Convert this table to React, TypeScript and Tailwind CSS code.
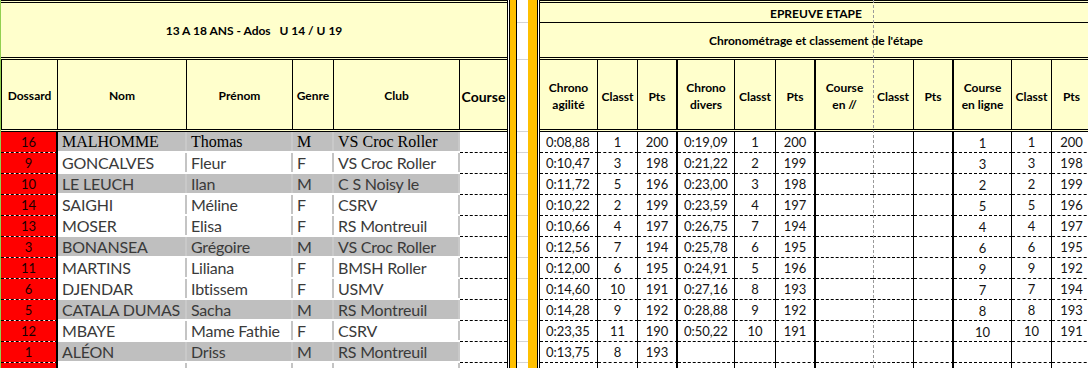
import React from 'react';

type Row = {
  dossard: string;
  nom: string;
  prenom: string;
  genre: string;
  club: string;
  res: string[];
};

const rows: Row[] = [
  { dossard: '16', nom: 'MALHOMME', prenom: 'Thomas', genre: 'M', club: 'VS Croc Roller', res: ['0:08,88', '1', '200', '0:19,09', '1', '200', '', '', '', '1', '1', '200'] },
  { dossard: '9', nom: 'GONCALVES', prenom: 'Fleur', genre: 'F', club: 'VS Croc Roller', res: ['0:10,47', '3', '198', '0:21,22', '2', '199', '', '', '', '3', '3', '198'] },
  { dossard: '10', nom: 'LE LEUCH', prenom: 'Ilan', genre: 'M', club: 'C S Noisy le', res: ['0:11,72', '5', '196', '0:23,00', '3', '198', '', '', '', '2', '2', '199'] },
  { dossard: '14', nom: 'SAIGHI', prenom: 'Méline', genre: 'F', club: 'CSRV', res: ['0:10,22', '2', '199', '0:23,59', '4', '197', '', '', '', '5', '5', '196'] },
  { dossard: '13', nom: 'MOSER', prenom: 'Elisa', genre: 'F', club: 'RS Montreuil', res: ['0:10,66', '4', '197', '0:26,75', '7', '194', '', '', '', '4', '4', '197'] },
  { dossard: '3', nom: 'BONANSEA', prenom: 'Grégoire', genre: 'M', club: 'VS Croc Roller', res: ['0:12,56', '7', '194', '0:25,78', '6', '195', '', '', '', '6', '6', '195'] },
  { dossard: '11', nom: 'MARTINS', prenom: 'Liliana', genre: 'F', club: 'BMSH Roller', res: ['0:12,00', '6', '195', '0:24,91', '5', '196', '', '', '', '9', '9', '192'] },
  { dossard: '6', nom: 'DJENDAR', prenom: 'Ibtissem', genre: 'F', club: 'USMV', res: ['0:14,60', '10', '191', '0:27,16', '8', '193', '', '', '', '7', '7', '194'] },
  { dossard: '5', nom: 'CATALA DUMAS', prenom: 'Sacha', genre: 'M', club: 'RS Montreuil', res: ['0:14,28', '9', '192', '0:28,88', '9', '192', '', '', '', '8', '8', '193'] },
  { dossard: '12', nom: 'MBAYE', prenom: 'Mame Fathie', genre: 'F', club: 'CSRV', res: ['0:23,35', '11', '190', '0:50,22', '10', '191', '', '', '', '10', '10', '191'] },
  { dossard: '1', nom: 'ALÉON', prenom: 'Driss', genre: 'M', club: 'RS Montreuil', res: ['0:13,75', '8', '193', '', '', '', '', '', '', '', '', ''] },
  { dossard: '', nom: '', prenom: '', genre: '', club: '', res: ['', '', '', '', '', '', '', '', '', '', '', ''] },
];

// right table columns: width incl. right border, border class
const rightCols = [
  { w: 'w-[58px]', b: 'border-r', label: 'Chrono\nagilité' },
  { w: 'w-[40px]', b: 'border-r', label: 'Classt' },
  { w: 'w-[40px]', b: 'border-r-2', label: 'Pts' },
  { w: 'w-[57px]', b: 'border-r', label: 'Chrono\ndivers' },
  { w: 'w-[41px]', b: 'border-r', label: 'Classt' },
  { w: 'w-[40px]', b: 'border-r-2', label: 'Pts' },
  { w: 'w-[57px]', b: '', label: 'Course\nen //' },
  { w: 'w-[41px]', b: 'border-r', label: 'Classt' },
  { w: 'w-[40px]', b: 'border-r-2', label: 'Pts' },
  { w: 'w-[58px]', b: 'border-r', label: 'Course\nen ligne' },
  { w: 'w-[40px]', b: 'border-r', label: 'Classt' },
  { w: 'w-[40px]', b: 'border-r', label: 'Pts' },
];

const nameCols = [
  { w: 'w-[129px]', label: 'Nom', key: 'nom' as const },
  { w: 'w-[106px]', label: 'Prénom', key: 'prenom' as const },
  { w: 'w-[41px]', label: 'Genre', key: 'genre' as const },
  { w: 'w-[126px]', label: 'Club', key: 'club' as const },
];

function LeftTable() {
  return (
    <div className="w-[509px] shrink-0 flex flex-col border-r-[3px] border-double border-black">
      {/* Title */}
      <div className="h-[60px] shrink-0 bg-[#ffffcc] border-y-[3px] border-double border-black flex items-center justify-center text-[12px] font-bold whitespace-pre pt-[1px]">
        {'13 A 18 ANS - Ados   U 14 / U 19'}
      </div>

      {/* Column headers */}
      <div className="h-[72px] shrink-0 flex bg-[#ffffcc] border-b-[3px] border-double border-black text-[12px] font-bold">
        <div className="w-[57px] border-x border-black flex items-center justify-center pt-[3px]">Dossard</div>
        {nameCols.map((c) => (
          <div key={c.label} className={`${c.w} border-r border-black flex items-center justify-center pt-[3px]`}>
            {c.label}
          </div>
        ))}
        <div className="w-[47px] flex items-center justify-center text-[14px] pt-[3px]">Course</div>
      </div>

      {/* Rows */}
      {rows.map((r, i) => {
        const gray = r.genre === 'M';
        const serif = i === 0;
        return (
          <div key={i} className="h-[21px] shrink-0 flex bg-white">
            <div className="w-[57px] bg-[#ff0000] bg-clip-padding border-r-2 border-b border-black [border-bottom-style:dashed] flex items-center justify-center text-[13px] text-[#1a0000] pt-[1px]">
              {r.dossard}
            </div>
            {nameCols.map((c) => (
              <div key={c.key} className={`${c.w} h-full`}>
                <div
                  className={`h-[19px] border-r-2 pl-[4px] flex items-center whitespace-nowrap overflow-hidden ${
                    gray ? 'bg-[#bfbfbf] border-[#c9c9c9]' : 'bg-white border-[#c4c4c4]'
                  } ${
                    serif
                      ? "[font-family:'Liberation_Serif',serif] text-[16px] text-black"
                      : 'text-[16px] tracking-[-0.2px] text-[#3a3a3a] pt-[1px]'
                  }`}
                >
                  {r[c.key]}
                </div>
              </div>
            ))}
            <div className="w-[47px] border-b border-dashed border-black" />
          </div>
        );
      })}
    </div>
  );
}

function Splitter() {
  return (
    <div className="flex shrink-0">
      <div className="w-[7px] bg-[#ffc000] border-r border-black" />
      <div className="w-[11px] flex flex-col bg-white">
        <div className="h-[23px] shrink-0 border-b border-[#d4d4d4]" />
        <div className="h-[37px] shrink-0 border-b border-[#d4d4d4]" />
        <div className="h-[72px] shrink-0 border-b border-[#d4d4d4]" />
        {rows.map((_, i) => (
          <div key={i} className="h-[21px] shrink-0 border-b border-[#d4d4d4]" />
        ))}
      </div>
      <div className="w-[9px] bg-[#ffc000]" />
    </div>
  );
}

function RightTable() {
  return (
    <div className="relative w-[555px] shrink-0 flex flex-col border-l-[3px] border-double border-black">
      <div className="h-[23px] shrink-0 bg-[#ffffcc] border-t-[3px] border-b border-double border-black [border-bottom-style:solid] flex items-center justify-center text-[12px] font-bold pt-[2px]">
        EPREUVE ETAPE
      </div>
      <div className="h-[37px] shrink-0 bg-[#ffffcc] border-b-[3px] border-double border-black flex items-center justify-center text-[12px] font-bold pt-[2px]">
        Chronométrage et classement de l'étape
      </div>

      <div className="h-[72px] shrink-0 flex bg-[#ffffcc] border-b-[3px] border-double border-black text-[12px] font-bold leading-[17px]">
        {rightCols.map((c, i) => (
          <div
            key={i}
            className={`${c.w} ${c.b} border-black flex items-center justify-center text-center whitespace-pre-line pt-[3px]`}
          >
            {c.label}
          </div>
        ))}
      </div>

      {rows.map((r, i) => (
        <div key={i} className="h-[21px] shrink-0 flex text-[13px] text-[#141414]">
          {rightCols.map((c, j) => {
            const chrono = j === 0 || j === 3;
            const ligne = j === 9;
            return (
              <div
                key={j}
                className={`${c.w} ${c.b} border-b border-black [border-bottom-style:dashed] flex items-center ${
                  chrono ? 'pl-[6px]' : 'justify-center'
                } ${ligne ? 'pt-[4px]' : 'pt-[2px]'}`}
              >
                {r.res[j]}
              </div>
            );
          })}
        </div>
      ))}

      {/* page break marker */}
      <div className="absolute top-0 bottom-0 left-[333px] border-l border-dashed border-[#9a9a9a]" />
    </div>
  );
}

export default function App() {
  return (
    <div className="w-[1088px] h-[368px] overflow-hidden bg-white flex [font-family:Lato,sans-serif] text-black">
      <div className="w-px shrink-0 bg-[#92d050]" />
      <LeftTable />
      <Splitter />
      <RightTable />
    </div>
  );
}
